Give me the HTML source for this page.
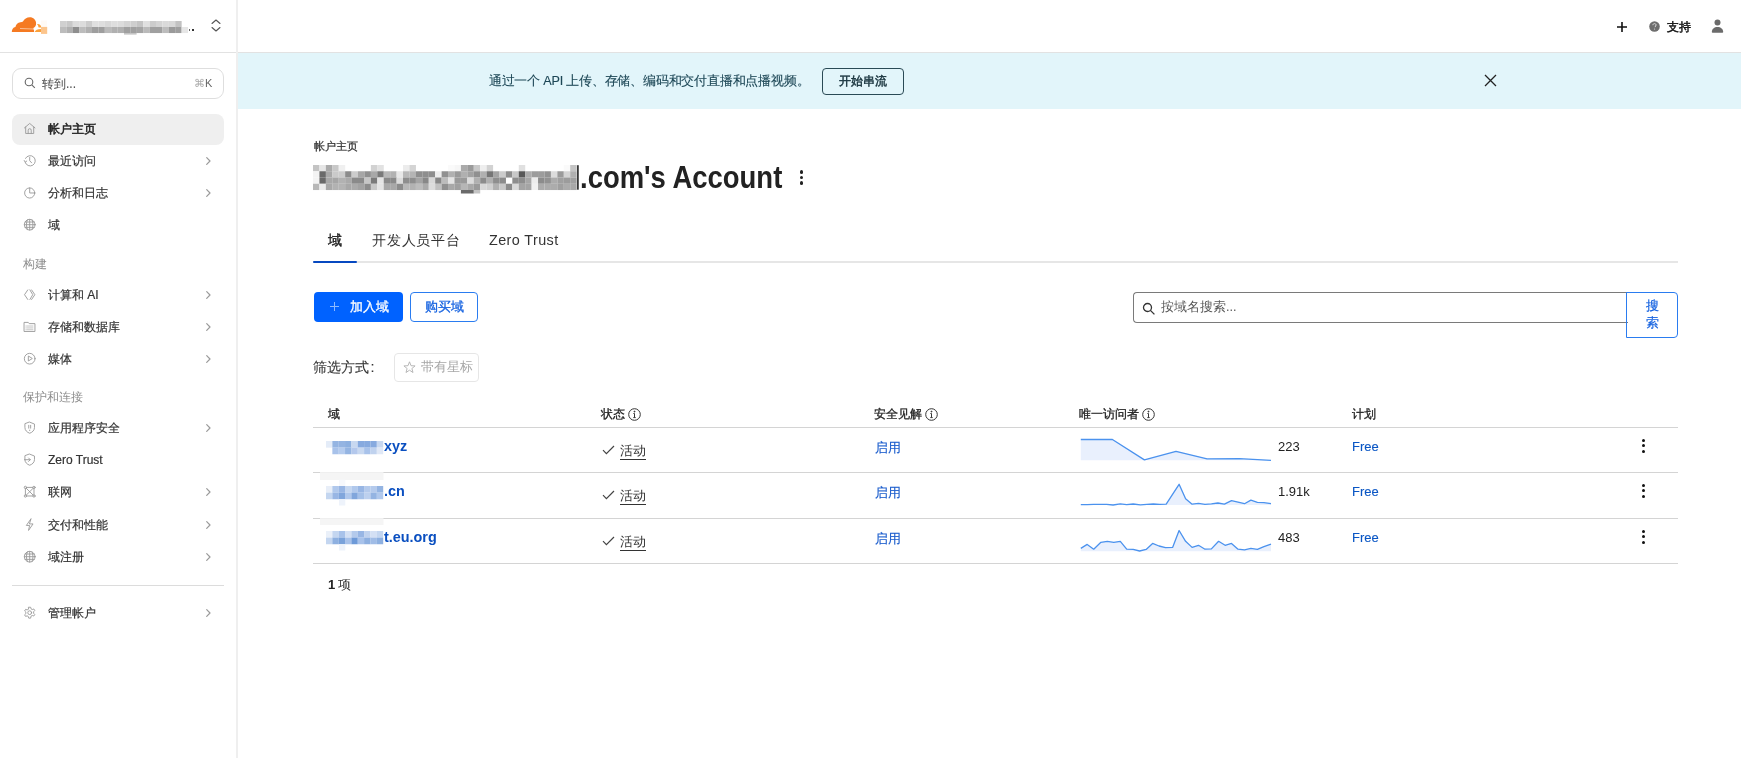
<!DOCTYPE html>
<html><head><meta charset="utf-8">
<style>
*{box-sizing:border-box;margin:0;padding:0}
html,body{width:1741px;height:758px;overflow:hidden;background:#fff;-webkit-font-smoothing:antialiased;font-family:"Liberation Sans",sans-serif;color:#313131}
.abs{position:absolute}
#top{position:absolute;left:0;top:0;width:1741px;height:53px;border-bottom:1px solid #e2e2e2}
#side{position:absolute;left:236px;top:0;width:2px;height:758px;background:#efefef}
#banner{position:absolute;left:238px;top:53px;width:1503px;height:56px;background:#e2f5fa}
.nt{position:absolute;left:48px;font-size:12px;line-height:16px;color:#333;white-space:nowrap;-webkit-text-stroke:0.2px #333}
.nt.sel{color:#222;-webkit-text-stroke:0.5px #222}
.sec{position:absolute;left:23px;font-size:12px;line-height:16px;color:#8d8d8d}
.dom{position:absolute;left:384px;font-size:14.4px;line-height:18px;font-weight:bold;color:#0a4fc0}
.blurdom{position:absolute;left:326px;width:58px;height:13px;background:#a9c2ea}
.act{position:absolute;left:619.5px;font-size:12.6px;line-height:16px;color:#333;border-bottom:1px solid #333;padding-bottom:0}
.lnk{position:absolute;font-size:12.6px;line-height:16px;color:#1a5ccc;-webkit-text-stroke:0.15px #1a5ccc}
.free{font-size:13px;color:#0a56c4;-webkit-text-stroke:0.1px #0a56c4}
.num{position:absolute;left:1278px;font-size:13px;line-height:16px;color:#222}
.kebab{position:absolute;left:1642px;width:4px;height:18px}
.kebab i{display:block;width:3.2px;height:3.2px;border-radius:50%;background:#111;margin:0 0 2.6px 0}
.th{position:absolute;top:406px;font-size:11.7px;line-height:16px;color:#222;-webkit-text-stroke:0.3px #222}
.info{display:inline-block;vertical-align:top;margin-left:3.3px;margin-top:1.5px}
.hline{position:absolute;left:313px;width:1365px;height:1px;background:#d4d4d4}
</style></head><body><div id="root" style="position:absolute;left:0;top:0;width:1741px;height:758px;will-change:transform">
<div id="top"></div>
<div id="side"></div>
<div id="banner"></div>

<!-- logo -->
<svg class="abs" style="left:0;top:0" width="50" height="40" viewBox="0 0 50 40">
  <rect x="41" y="20.5" width="6" height="6.4" fill="#fffaf5"/>
  <path d="M11.8 32C11.8 29.6 13.1 27.4 15.4 27.1C15.9 24.4 17.8 22.4 20.4 22.2C21.6 22.1 22.4 21.9 23 21.5C24.2 18.9 26.8 17.3 29.8 17.3C33.3 17.3 36.1 19.9 36.1 23.4C36.1 25.6 35.1 27.1 33.3 28L33.5 29.3C34 30.1 34.2 31 34.1 32Z" fill="#f57a22"/>
  <path d="M20 28.4L33.4 28.8L33.5 29.3L20 29.1Z" fill="#fff"/>
  <path d="M37 24.1C39.6 23.8 41.2 25.3 41.2 27.6L38.6 27.6C38.4 26.2 37.9 25 37 24.1Z" fill="#fba03a"/>
  <path d="M34.7 32C35.4 30.3 37.4 29.2 41.2 29.1L41.2 32Z" fill="#fba03a"/>
  <rect x="41" y="26.9" width="6.2" height="7" fill="#fcc58c"/>
</svg>
<!-- account name blurred -->
<svg class="abs" style="left:60px;top:21px;overflow:visible" width="128" height="12"><rect x="0.00" y="0.00" width="6.45" height="6.05" fill="#d0d0d0"/><rect x="6.40" y="0.00" width="6.45" height="6.05" fill="#c8c8c8"/><rect x="12.80" y="0.00" width="6.45" height="6.05" fill="#dcdcdc"/><rect x="19.20" y="0.00" width="6.45" height="6.05" fill="#dcdcdc"/><rect x="25.60" y="0.00" width="6.45" height="6.05" fill="#cccccc"/><rect x="32.00" y="0.00" width="6.45" height="6.05" fill="#e0e0e0"/><rect x="38.40" y="0.00" width="6.45" height="6.05" fill="#dedede"/><rect x="44.80" y="0.00" width="6.45" height="6.05" fill="#d8d8d8"/><rect x="51.20" y="0.00" width="6.45" height="6.05" fill="#dedede"/><rect x="57.60" y="0.00" width="6.45" height="6.05" fill="#dcdcdc"/><rect x="64.00" y="0.00" width="6.45" height="6.05" fill="#d4d4d4"/><rect x="70.40" y="0.00" width="6.45" height="6.05" fill="#cecece"/><rect x="76.80" y="0.00" width="6.45" height="6.05" fill="#c4c4c4"/><rect x="83.20" y="0.00" width="6.45" height="6.05" fill="#e0e0e0"/><rect x="89.60" y="0.00" width="6.45" height="6.05" fill="#cccccc"/><rect x="96.00" y="0.00" width="6.45" height="6.05" fill="#d4d4d4"/><rect x="102.40" y="0.00" width="6.45" height="6.05" fill="#dadada"/><rect x="108.80" y="0.00" width="6.45" height="6.05" fill="#d8d8d8"/><rect x="115.20" y="0.00" width="6.45" height="6.05" fill="#c2c2c2"/><rect x="0.00" y="6.00" width="6.45" height="6.05" fill="#bcbcbc"/><rect x="6.40" y="6.00" width="6.45" height="6.05" fill="#b0b0b0"/><rect x="12.80" y="6.00" width="6.45" height="6.05" fill="#8e8e8e"/><rect x="19.20" y="6.00" width="6.45" height="6.05" fill="#bcbcbc"/><rect x="25.60" y="6.00" width="6.45" height="6.05" fill="#b0b0b0"/><rect x="32.00" y="6.00" width="6.45" height="6.05" fill="#9e9e9e"/><rect x="38.40" y="6.00" width="6.45" height="6.05" fill="#9e9e9e"/><rect x="44.80" y="6.00" width="6.45" height="6.05" fill="#bababa"/><rect x="51.20" y="6.00" width="6.45" height="6.05" fill="#b0b0b0"/><rect x="57.60" y="6.00" width="6.45" height="6.05" fill="#b0b0b0"/><rect x="64.00" y="6.00" width="6.45" height="6.05" fill="#a0a0a0"/><rect x="70.40" y="6.00" width="6.45" height="6.05" fill="#a0a0a0"/><rect x="76.80" y="6.00" width="6.45" height="6.05" fill="#a4a4a4"/><rect x="83.20" y="6.00" width="6.45" height="6.05" fill="#bababa"/><rect x="89.60" y="6.00" width="6.45" height="6.05" fill="#a0a0a0"/><rect x="96.00" y="6.00" width="6.45" height="6.05" fill="#a0a0a0"/><rect x="102.40" y="6.00" width="6.45" height="6.05" fill="#bcbcbc"/><rect x="108.80" y="6.00" width="6.45" height="6.05" fill="#9a9a9a"/><rect x="115.20" y="6.00" width="6.45" height="6.05" fill="#9e9e9e"/><rect x="121.60" y="6.00" width="6.45" height="6.05" fill="#e6e6e6"/><rect x="64.00" y="12.00" width="12.60" height="1.60" fill="#c4c4c4"/></svg>
<div class="abs" style="left:188.5px;top:29px;width:1.6px;height:1.8px;background:#666"></div>
<div class="abs" style="left:192px;top:29px;width:1.8px;height:1.8px;background:#333"></div>
<svg class="abs" style="left:210px;top:19px" width="12" height="13" viewBox="0 0 12 13" fill="none" stroke="#555" stroke-width="1.1" stroke-linecap="round" stroke-linejoin="round"><path d="M2 4.5L6 1l4 3.5M2 8.5L6 12l4-3.5"/></svg>

<!-- sidebar search -->
<div class="abs" style="left:12px;top:68px;width:212px;height:31px;border:1px solid #dedede;border-radius:9px"></div>
<svg class="abs" style="left:24px;top:77px" width="12" height="12" viewBox="0 0 12 12" fill="none" stroke="#666" stroke-width="1.1"><circle cx="5" cy="5" r="3.8"/><path d="M7.8 7.8L10.8 10.8"/></svg>
<div class="abs" style="left:42px;top:76px;font-size:12px;line-height:16px;color:#555;-webkit-text-stroke:0.1px #555">转到...</div>
<div class="abs" style="left:194px;top:76px;font-size:11px;line-height:14px;color:#666"><span style="color:#aaa">⌘</span>K</div>

<!-- selected bg -->
<div class="abs" style="left:12px;top:114px;width:212px;height:31px;background:#efefef;border-radius:8px"></div>

<div class="sec" style="top:256px">构建</div>
<div class="sec" style="top:389px">保护和连接</div>
<div class="abs" style="left:12px;top:585px;width:212px;height:1px;background:#dcdcdc"></div>
<svg class="abs" style="left:23.3px;top:121.8px" width="13.4" height="13.4" viewBox="0 0 14 14" fill="none" stroke="#999999" stroke-width="0.95" stroke-linecap="round" stroke-linejoin="round"><path d="M1.5 6.2L7 1.5l5.5 4.7M2.8 5.2v6.8h8.4V5.2M5.4 12V8.6a1.6 1.6 0 0 1 3.2 0V12"/></svg>
<div class="nt sel" style="top:120.5px">帐户主页</div>
<svg class="abs" style="left:23.3px;top:154.3px" width="13.4" height="13.4" viewBox="0 0 14 14" fill="none" stroke="#999999" stroke-width="0.95" stroke-linecap="round" stroke-linejoin="round"><path d="M2.2 8.6A5.4 5.4 0 1 0 2.6 4.6"/><path d="M1.3 6.8l1 1.7 1.6-1.1"/><path d="M7 3.6V7l2 2.2"/></svg>
<div class="nt" style="top:153.0px">最近访问</div>
<svg class="abs" style="left:204px;top:156.2px" width="8" height="10" viewBox="0 0 8 10" fill="none" stroke="#9a9a9a" stroke-width="1.2" stroke-linecap="round" stroke-linejoin="round"><path d="M2.7 1.6L6 5 2.7 8.4"/></svg>
<svg class="abs" style="left:23.3px;top:186.3px" width="13.4" height="13.4" viewBox="0 0 14 14" fill="none" stroke="#999999" stroke-width="0.95" stroke-linecap="round" stroke-linejoin="round"><circle cx="7" cy="7.3" r="5.3"/><path d="M7 2v5.3h5.3"/></svg>
<div class="nt" style="top:185.0px">分析和日志</div>
<svg class="abs" style="left:204px;top:188.2px" width="8" height="10" viewBox="0 0 8 10" fill="none" stroke="#9a9a9a" stroke-width="1.2" stroke-linecap="round" stroke-linejoin="round"><path d="M2.7 1.6L6 5 2.7 8.4"/></svg>
<svg class="abs" style="left:23.3px;top:218.3px" width="13.4" height="13.4" viewBox="0 0 14 14" fill="none" stroke="#999999" stroke-width="0.95" stroke-linecap="round" stroke-linejoin="round"><circle cx="7" cy="7" r="5.6"/><path d="M1.4 7h11.2M2.2 4.2h9.6M2.2 9.8h9.6M7 1.4v11.2M4.6 1.9c-1.4 3-1.4 7.2 0 10.2M9.4 1.9c1.4 3 1.4 7.2 0 10.2"/></svg>
<div class="nt" style="top:217.0px">域</div>
<svg class="abs" style="left:23.3px;top:288.3px" width="13.4" height="13.4" viewBox="0 0 14 14" fill="none" stroke="#999999" stroke-width="0.95" stroke-linecap="round" stroke-linejoin="round"><path d="M5 2L1.6 7 5 12M7.2 2l3 5-3 5M9 2l3.4 5L9 12"/></svg>
<div class="nt" style="top:287.0px">计算和 AI</div>
<svg class="abs" style="left:204px;top:290.2px" width="8" height="10" viewBox="0 0 8 10" fill="none" stroke="#9a9a9a" stroke-width="1.2" stroke-linecap="round" stroke-linejoin="round"><path d="M2.7 1.6L6 5 2.7 8.4"/></svg>
<svg class="abs" style="left:23.3px;top:320.3px" width="13.4" height="13.4" viewBox="0 0 14 14" fill="none" stroke="#999999" stroke-width="0.95" stroke-linecap="round" stroke-linejoin="round"><path d="M1.5 2.5h4l1 1.3h6v8.2h-11z"/><path d="M4.6 6.3h5.8M4.6 8.3h5.8M4.6 10.2h5.8M3 6.3h.6M3 8.3h.6M3 10.2h.6" stroke-width=".8" opacity=".75"/></svg>
<div class="nt" style="top:319.0px">存储和数据库</div>
<svg class="abs" style="left:204px;top:322.2px" width="8" height="10" viewBox="0 0 8 10" fill="none" stroke="#9a9a9a" stroke-width="1.2" stroke-linecap="round" stroke-linejoin="round"><path d="M2.7 1.6L6 5 2.7 8.4"/></svg>
<svg class="abs" style="left:23.3px;top:352.3px" width="13.4" height="13.4" viewBox="0 0 14 14" fill="none" stroke="#999999" stroke-width="0.95" stroke-linecap="round" stroke-linejoin="round"><circle cx="7" cy="7" r="5.6"/><path d="M5.6 4.6v4.8L9.4 7z"/></svg>
<div class="nt" style="top:351.0px">媒体</div>
<svg class="abs" style="left:204px;top:354.2px" width="8" height="10" viewBox="0 0 8 10" fill="none" stroke="#9a9a9a" stroke-width="1.2" stroke-linecap="round" stroke-linejoin="round"><path d="M2.7 1.6L6 5 2.7 8.4"/></svg>
<svg class="abs" style="left:23.3px;top:421.3px" width="13.4" height="13.4" viewBox="0 0 14 14" fill="none" stroke="#999999" stroke-width="0.95" stroke-linecap="round" stroke-linejoin="round"><path d="M7 1.2l5 2v3.6c0 3-2.2 5-5 6-2.8-1-5-3-5-6V3.2z"/><path d="M6 4.5v3M8 4.5v3M7 9.5v.5"/></svg>
<div class="nt" style="top:420.0px">应用程序安全</div>
<svg class="abs" style="left:204px;top:423.2px" width="8" height="10" viewBox="0 0 8 10" fill="none" stroke="#9a9a9a" stroke-width="1.2" stroke-linecap="round" stroke-linejoin="round"><path d="M2.7 1.6L6 5 2.7 8.4"/></svg>
<svg class="abs" style="left:23.3px;top:453.3px" width="13.4" height="13.4" viewBox="0 0 14 14" fill="none" stroke="#999999" stroke-width="0.95" stroke-linecap="round" stroke-linejoin="round"><path d="M7 1.2l5 2v3.6c0 3-2.2 5-5 6-2.8-1-5-3-5-6V3.2z"/><path d="M1.5 7h6M5.8 5.2L7.6 7 5.8 8.8"/></svg>
<div class="nt" style="top:452.0px">Zero Trust</div>
<svg class="abs" style="left:23.3px;top:485.3px" width="13.4" height="13.4" viewBox="0 0 14 14" fill="none" stroke="#999999" stroke-width="0.95" stroke-linecap="round" stroke-linejoin="round"><circle cx="2.5" cy="2.5" r="1.2"/><circle cx="11.5" cy="2.5" r="1.2"/><circle cx="2.5" cy="11.5" r="1.2"/><circle cx="11.5" cy="11.5" r="1.2"/><path d="M3.7 2.5h6.6M3.7 11.5h6.6M2.5 3.7v6.6M11.5 3.7v6.6M3.4 3.4l7.2 7.2M10.6 3.4l-7.2 7.2"/></svg>
<div class="nt" style="top:484.0px">联网</div>
<svg class="abs" style="left:204px;top:487.2px" width="8" height="10" viewBox="0 0 8 10" fill="none" stroke="#9a9a9a" stroke-width="1.2" stroke-linecap="round" stroke-linejoin="round"><path d="M2.7 1.6L6 5 2.7 8.4"/></svg>
<svg class="abs" style="left:23.3px;top:518.3px" width="13.4" height="13.4" viewBox="0 0 14 14" fill="none" stroke="#999999" stroke-width="0.95" stroke-linecap="round" stroke-linejoin="round"><path d="M8.2 1L3.5 7.8h3.4L5.8 13l4.7-6.8H7.1z"/></svg>
<div class="nt" style="top:517.0px">交付和性能</div>
<svg class="abs" style="left:204px;top:520.2px" width="8" height="10" viewBox="0 0 8 10" fill="none" stroke="#9a9a9a" stroke-width="1.2" stroke-linecap="round" stroke-linejoin="round"><path d="M2.7 1.6L6 5 2.7 8.4"/></svg>
<svg class="abs" style="left:23.3px;top:550.3px" width="13.4" height="13.4" viewBox="0 0 14 14" fill="none" stroke="#999999" stroke-width="0.95" stroke-linecap="round" stroke-linejoin="round"><circle cx="7" cy="7" r="5.6"/><path d="M1.4 7h11.2M2.2 4.2h9.6M2.2 9.8h9.6M7 1.4v11.2M4.6 1.9c-1.4 3-1.4 7.2 0 10.2M9.4 1.9c1.4 3 1.4 7.2 0 10.2"/></svg>
<div class="nt" style="top:549.0px">域注册</div>
<svg class="abs" style="left:204px;top:552.2px" width="8" height="10" viewBox="0 0 8 10" fill="none" stroke="#9a9a9a" stroke-width="1.2" stroke-linecap="round" stroke-linejoin="round"><path d="M2.7 1.6L6 5 2.7 8.4"/></svg>
<svg class="abs" style="left:23.3px;top:606.3px" width="13.4" height="13.4" viewBox="0 0 14 14" fill="none" stroke="#999999" stroke-width="0.95" stroke-linecap="round" stroke-linejoin="round"><circle cx="7" cy="7" r="2"/><path d="M6 1.3h2l.4 1.7 1.3.7 1.6-.6 1 1.7-1.2 1.2v1.6l1.2 1.2-1 1.7-1.6-.6-1.3.7L8 12.7H6l-.4-1.7-1.3-.7-1.6.6-1-1.7L3 8V6.4L1.7 5.2l1-1.7 1.6.6 1.3-.7z"/></svg>
<div class="nt" style="top:605.0px">管理帐户</div>
<svg class="abs" style="left:204px;top:608.2px" width="8" height="10" viewBox="0 0 8 10" fill="none" stroke="#9a9a9a" stroke-width="1.2" stroke-linecap="round" stroke-linejoin="round"><path d="M2.7 1.6L6 5 2.7 8.4"/></svg>

<!-- top right -->
<svg class="abs" style="left:1616px;top:21px" width="12" height="12" viewBox="0 0 12 12" stroke="#111" stroke-width="1.6"><path d="M6 1v10M1 6h10"/></svg>
<svg class="abs" style="left:1649px;top:21px" width="11" height="11" viewBox="0 0 11 11"><circle cx="5.5" cy="5.5" r="5.3" fill="#6e6e6e"/><path d="M3.9 4.2c0-1 .7-1.6 1.6-1.6s1.6.6 1.6 1.4c0 1-1.1 1.2-1.1 2.2" fill="none" stroke="#ddd" stroke-width="1"/><circle cx="5.5" cy="8" r=".6" fill="#ddd"/></svg>
<div class="abs" style="left:1667px;top:19px;font-size:12.3px;line-height:16px;color:#111;-webkit-text-stroke:0.45px #111">支持</div>
<svg class="abs" style="left:1711px;top:19px" width="13" height="14" viewBox="0 0 13 14" fill="#6b6b6b"><circle cx="6.5" cy="3.4" r="3"/><path d="M0.8 13c0-3 2.5-5 5.7-5s5.7 2 5.7 5c0 .5-.3.8-.8.8H1.6c-.5 0-.8-.3-.8-.8z"/></svg>

<!-- banner -->
<div class="abs" style="left:488.8px;top:73px;font-size:12.6px;letter-spacing:-0.2px;line-height:16px;color:#1d4756;white-space:nowrap;-webkit-text-stroke:0.12px #1d4756">通过一个 API 上传、存储、编码和交付直播和点播视频。</div>
<div class="abs" style="left:822px;top:68px;width:82px;height:27px;border:1px solid #2a4a55;border-radius:4px;font-size:12.2px;line-height:25px;text-align:center;color:#17323c;-webkit-text-stroke:0.45px #17323c">开始串流</div>
<svg class="abs" style="left:1484px;top:74px" width="13" height="13" viewBox="0 0 13 13" stroke="#222" stroke-width="1.3"><path d="M1 1l11 11M12 1L1 12"/></svg>

<!-- header -->
<div class="abs" style="left:313.5px;top:139px;font-size:10.8px;line-height:14px;color:#333;-webkit-text-stroke:0.25px #333">帐户主页</div>
<svg class="abs" style="left:313.2px;top:164.8px;overflow:visible" width="264" height="25"><rect x="0.00" y="0.00" width="6.48" height="6.30" fill="#c4c4c4"/><rect x="6.43" y="0.00" width="6.48" height="6.30" fill="#e6e6e6"/><rect x="12.86" y="0.00" width="6.48" height="6.30" fill="#aaaaaa"/><rect x="19.29" y="0.00" width="6.48" height="6.30" fill="#c8c8c8"/><rect x="25.72" y="0.00" width="6.48" height="6.30" fill="#f0f0f0"/><rect x="57.87" y="0.00" width="6.48" height="6.30" fill="#d2d2d2"/><rect x="64.30" y="0.00" width="6.48" height="6.30" fill="#e2e2e2"/><rect x="90.02" y="0.00" width="6.48" height="6.30" fill="#ececec"/><rect x="96.45" y="0.00" width="6.48" height="6.30" fill="#d4d4d4"/><rect x="135.03" y="0.00" width="6.48" height="6.30" fill="#fafafa"/><rect x="141.46" y="0.00" width="6.48" height="6.30" fill="#f6f6f6"/><rect x="147.89" y="0.00" width="6.48" height="6.30" fill="#aaaaaa"/><rect x="154.32" y="0.00" width="6.48" height="6.30" fill="#9a9a9a"/><rect x="160.75" y="0.00" width="6.48" height="6.30" fill="#c8c8c8"/><rect x="167.18" y="0.00" width="6.48" height="6.30" fill="#eeeeee"/><rect x="173.61" y="0.00" width="6.48" height="6.30" fill="#d2d2d2"/><rect x="205.76" y="0.00" width="6.48" height="6.30" fill="#e0e0e0"/><rect x="250.77" y="0.00" width="6.48" height="6.30" fill="#fafafa"/><rect x="257.20" y="0.00" width="6.48" height="6.30" fill="#c4c4c4"/><rect x="0.00" y="6.25" width="6.48" height="6.30" fill="#f3f3f3"/><rect x="6.43" y="6.25" width="6.48" height="6.30" fill="#6a6a6a"/><rect x="12.86" y="6.25" width="6.48" height="6.30" fill="#a8a8a8"/><rect x="19.29" y="6.25" width="6.48" height="6.30" fill="#cacaca"/><rect x="25.72" y="6.25" width="6.48" height="6.30" fill="#cccccc"/><rect x="32.15" y="6.25" width="6.48" height="6.30" fill="#8c8c8c"/><rect x="38.58" y="6.25" width="6.48" height="6.30" fill="#cccccc"/><rect x="45.01" y="6.25" width="6.48" height="6.30" fill="#a6a6a6"/><rect x="51.44" y="6.25" width="6.48" height="6.30" fill="#909090"/><rect x="57.87" y="6.25" width="6.48" height="6.30" fill="#a8a8a8"/><rect x="64.30" y="6.25" width="6.48" height="6.30" fill="#7a7a7a"/><rect x="70.73" y="6.25" width="6.48" height="6.30" fill="#b8b8b8"/><rect x="77.16" y="6.25" width="6.48" height="6.30" fill="#b2b2b2"/><rect x="83.59" y="6.25" width="6.48" height="6.30" fill="#e8e8e8"/><rect x="90.02" y="6.25" width="6.48" height="6.30" fill="#b8b8b8"/><rect x="96.45" y="6.25" width="6.48" height="6.30" fill="#b4b4b4"/><rect x="102.88" y="6.25" width="6.48" height="6.30" fill="#8e8e8e"/><rect x="109.31" y="6.25" width="6.48" height="6.30" fill="#8e8e8e"/><rect x="115.74" y="6.25" width="6.48" height="6.30" fill="#8e8e8e"/><rect x="122.17" y="6.25" width="6.48" height="6.30" fill="#eeeeee"/><rect x="128.60" y="6.25" width="6.48" height="6.30" fill="#909090"/><rect x="135.03" y="6.25" width="6.48" height="6.30" fill="#b0b0b0"/><rect x="141.46" y="6.25" width="6.48" height="6.30" fill="#9a9a9a"/><rect x="147.89" y="6.25" width="6.48" height="6.30" fill="#b0b0b0"/><rect x="154.32" y="6.25" width="6.48" height="6.30" fill="#a2a2a2"/><rect x="160.75" y="6.25" width="6.48" height="6.30" fill="#909090"/><rect x="167.18" y="6.25" width="6.48" height="6.30" fill="#b0b0b0"/><rect x="173.61" y="6.25" width="6.48" height="6.30" fill="#767676"/><rect x="180.04" y="6.25" width="6.48" height="6.30" fill="#a4a4a4"/><rect x="186.47" y="6.25" width="6.48" height="6.30" fill="#cccccc"/><rect x="192.90" y="6.25" width="6.48" height="6.30" fill="#8e8e8e"/><rect x="199.33" y="6.25" width="6.48" height="6.30" fill="#c8c8c8"/><rect x="205.76" y="6.25" width="6.48" height="6.30" fill="#585858"/><rect x="212.19" y="6.25" width="6.48" height="6.30" fill="#acacac"/><rect x="218.62" y="6.25" width="6.48" height="6.30" fill="#9c9c9c"/><rect x="225.05" y="6.25" width="6.48" height="6.30" fill="#9c9c9c"/><rect x="231.48" y="6.25" width="6.48" height="6.30" fill="#929292"/><rect x="237.91" y="6.25" width="6.48" height="6.30" fill="#dcdcdc"/><rect x="244.34" y="6.25" width="6.48" height="6.30" fill="#9a9a9a"/><rect x="250.77" y="6.25" width="6.48" height="6.30" fill="#d4d4d4"/><rect x="257.20" y="6.25" width="6.48" height="6.30" fill="#b0b0b0"/><rect x="0.00" y="12.50" width="6.48" height="6.30" fill="#f3f3f3"/><rect x="6.43" y="12.50" width="6.48" height="6.30" fill="#6a6a6a"/><rect x="12.86" y="12.50" width="6.48" height="6.30" fill="#a8a8a8"/><rect x="19.29" y="12.50" width="6.48" height="6.30" fill="#a6a6a6"/><rect x="25.72" y="12.50" width="6.48" height="6.30" fill="#b2b2b2"/><rect x="32.15" y="12.50" width="6.48" height="6.30" fill="#aaaaaa"/><rect x="38.58" y="12.50" width="6.48" height="6.30" fill="#8a8a8a"/><rect x="45.01" y="12.50" width="6.48" height="6.30" fill="#8a8a8a"/><rect x="51.44" y="12.50" width="6.48" height="6.30" fill="#c6c6c6"/><rect x="57.87" y="12.50" width="6.48" height="6.30" fill="#7a7a7a"/><rect x="64.30" y="12.50" width="6.48" height="6.30" fill="#e4e4e4"/><rect x="70.73" y="12.50" width="6.48" height="6.30" fill="#8a8a8a"/><rect x="77.16" y="12.50" width="6.48" height="6.30" fill="#8a8a8a"/><rect x="83.59" y="12.50" width="6.48" height="6.30" fill="#dcdcdc"/><rect x="90.02" y="12.50" width="6.48" height="6.30" fill="#8e8e8e"/><rect x="96.45" y="12.50" width="6.48" height="6.30" fill="#8e8e8e"/><rect x="102.88" y="12.50" width="6.48" height="6.30" fill="#a4a4a4"/><rect x="109.31" y="12.50" width="6.48" height="6.30" fill="#888888"/><rect x="115.74" y="12.50" width="6.48" height="6.30" fill="#d8d8d8"/><rect x="122.17" y="12.50" width="6.48" height="6.30" fill="#888888"/><rect x="128.60" y="12.50" width="6.48" height="6.30" fill="#bcbcbc"/><rect x="135.03" y="12.50" width="6.48" height="6.30" fill="#e4e4e4"/><rect x="141.46" y="12.50" width="6.48" height="6.30" fill="#9a9a9a"/><rect x="147.89" y="12.50" width="6.48" height="6.30" fill="#9a9a9a"/><rect x="154.32" y="12.50" width="6.48" height="6.30" fill="#dcdcdc"/><rect x="160.75" y="12.50" width="6.48" height="6.30" fill="#b0b0b0"/><rect x="167.18" y="12.50" width="6.48" height="6.30" fill="#8c8c8c"/><rect x="173.61" y="12.50" width="6.48" height="6.30" fill="#b0b0b0"/><rect x="180.04" y="12.50" width="6.48" height="6.30" fill="#8e8e8e"/><rect x="186.47" y="12.50" width="6.48" height="6.30" fill="#8c8c8c"/><rect x="199.33" y="12.50" width="6.48" height="6.30" fill="#8e8e8e"/><rect x="205.76" y="12.50" width="6.48" height="6.30" fill="#8e8e8e"/><rect x="212.19" y="12.50" width="6.48" height="6.30" fill="#a6a6a6"/><rect x="218.62" y="12.50" width="6.48" height="6.30" fill="#ececec"/><rect x="225.05" y="12.50" width="6.48" height="6.30" fill="#8c8c8c"/><rect x="231.48" y="12.50" width="6.48" height="6.30" fill="#929292"/><rect x="237.91" y="12.50" width="6.48" height="6.30" fill="#acacac"/><rect x="244.34" y="12.50" width="6.48" height="6.30" fill="#a0a0a0"/><rect x="250.77" y="12.50" width="6.48" height="6.30" fill="#9c9c9c"/><rect x="257.20" y="12.50" width="6.48" height="6.30" fill="#a0a0a0"/><rect x="0.00" y="18.75" width="6.48" height="6.30" fill="#b8b8b8"/><rect x="6.43" y="18.75" width="6.48" height="6.30" fill="#ececec"/><rect x="12.86" y="18.75" width="6.48" height="6.30" fill="#a8a8a8"/><rect x="19.29" y="18.75" width="6.48" height="6.30" fill="#b2b2b2"/><rect x="25.72" y="18.75" width="6.48" height="6.30" fill="#b4b4b4"/><rect x="32.15" y="18.75" width="6.48" height="6.30" fill="#a8a8a8"/><rect x="38.58" y="18.75" width="6.48" height="6.30" fill="#aaaaaa"/><rect x="45.01" y="18.75" width="6.48" height="6.30" fill="#a2a2a2"/><rect x="51.44" y="18.75" width="6.48" height="6.30" fill="#8c8c8c"/><rect x="57.87" y="18.75" width="6.48" height="6.30" fill="#c8c8c8"/><rect x="64.30" y="18.75" width="6.48" height="6.30" fill="#e4e4e4"/><rect x="70.73" y="18.75" width="6.48" height="6.30" fill="#a8a8a8"/><rect x="77.16" y="18.75" width="6.48" height="6.30" fill="#a8a8a8"/><rect x="83.59" y="18.75" width="6.48" height="6.30" fill="#8c8c8c"/><rect x="90.02" y="18.75" width="6.48" height="6.30" fill="#b8b8b8"/><rect x="96.45" y="18.75" width="6.48" height="6.30" fill="#b2b2b2"/><rect x="102.88" y="18.75" width="6.48" height="6.30" fill="#bcbcbc"/><rect x="109.31" y="18.75" width="6.48" height="6.30" fill="#aaaaaa"/><rect x="115.74" y="18.75" width="6.48" height="6.30" fill="#dcdcdc"/><rect x="122.17" y="18.75" width="6.48" height="6.30" fill="#c0c0c0"/><rect x="128.60" y="18.75" width="6.48" height="6.30" fill="#909090"/><rect x="135.03" y="18.75" width="6.48" height="6.30" fill="#a8a8a8"/><rect x="141.46" y="18.75" width="6.48" height="6.30" fill="#a0a0a0"/><rect x="147.89" y="18.75" width="6.48" height="6.30" fill="#b6b6b6"/><rect x="154.32" y="18.75" width="6.48" height="6.30" fill="#a8a8a8"/><rect x="160.75" y="18.75" width="6.48" height="6.30" fill="#9a9a9a"/><rect x="167.18" y="18.75" width="6.48" height="6.30" fill="#d8d8d8"/><rect x="173.61" y="18.75" width="6.48" height="6.30" fill="#d0d0d0"/><rect x="180.04" y="18.75" width="6.48" height="6.30" fill="#b0b0b0"/><rect x="186.47" y="18.75" width="6.48" height="6.30" fill="#c8c8c8"/><rect x="192.90" y="18.75" width="6.48" height="6.30" fill="#8c8c8c"/><rect x="199.33" y="18.75" width="6.48" height="6.30" fill="#dadada"/><rect x="205.76" y="18.75" width="6.48" height="6.30" fill="#a4a4a4"/><rect x="212.19" y="18.75" width="6.48" height="6.30" fill="#a4a4a4"/><rect x="218.62" y="18.75" width="6.48" height="6.30" fill="#f0f0f0"/><rect x="225.05" y="18.75" width="6.48" height="6.30" fill="#acacac"/><rect x="231.48" y="18.75" width="6.48" height="6.30" fill="#acacac"/><rect x="237.91" y="18.75" width="6.48" height="6.30" fill="#acacac"/><rect x="244.34" y="18.75" width="6.48" height="6.30" fill="#a0a0a0"/><rect x="250.77" y="18.75" width="6.48" height="6.30" fill="#acacac"/><rect x="257.20" y="18.75" width="6.48" height="6.30" fill="#a8a8a8"/><rect x="147.90" y="25.00" width="12.90" height="3.50" fill="#6a6a6a"/><rect x="160.80" y="25.00" width="6.40" height="3.50" fill="#c4c4c4"/><rect x="264.10" y="0.20" width="1.60" height="24.50" fill="#222"/></svg>
<div class="abs" style="left:580px;top:159.5px;font-size:30.5px;line-height:34px;letter-spacing:0px;font-weight:bold;color:#222;white-space:nowrap;transform:scaleX(0.9);transform-origin:0 0">.com's Account</div>
<div class="abs" style="left:799.5px;top:170px;width:4px"><i style="display:block;width:3.5px;height:3.5px;border-radius:50%;background:#222;margin-bottom:2px"></i><i style="display:block;width:3.5px;height:3.5px;border-radius:50%;background:#222;margin-bottom:2px"></i><i style="display:block;width:3.5px;height:3.5px;border-radius:50%;background:#222"></i></div>

<!-- tabs -->
<div class="abs" style="left:328px;top:231px;font-size:14.4px;line-height:18px;color:#222;-webkit-text-stroke:0.4px #222">域</div>
<div class="abs" style="left:372px;top:231px;font-size:14.4px;letter-spacing:0.8px;line-height:18px;color:#333">开发人员平台</div>
<div class="abs" style="left:489px;top:231px;font-size:14.4px;letter-spacing:0.4px;line-height:18px;color:#333">Zero Trust</div>
<div class="abs" style="left:313px;top:261px;width:1365px;height:2px;background:#e6e6e6"></div>
<div class="abs" style="left:313px;top:260.5px;width:44px;height:2px;background:#0648c0;border-radius:1px"></div>

<!-- buttons -->
<div class="abs" style="left:314px;top:292px;width:89px;height:30px;background:#0062ff;border-radius:4px"></div>
<svg class="abs" style="left:329.5px;top:302px" width="9" height="9" viewBox="0 0 9 9" stroke="#8cbaff" stroke-width="1"><path d="M4.5 0v9M0 4.5h9"/></svg>
<div class="abs" style="left:350px;top:299px;font-size:12.6px;line-height:16px;color:#fff;-webkit-text-stroke:0.3px #fff">加入域</div>
<div class="abs" style="left:410px;top:292px;width:68px;height:30px;border:1px solid #2a7cf0;border-radius:4px"></div>
<div class="abs" style="left:425px;top:299px;font-size:12.6px;line-height:16px;color:#1663e0;-webkit-text-stroke:0.3px #1663e0">购买域</div>

<!-- search -->
<div class="abs" style="left:1133px;top:292px;width:495px;height:31px;border:1px solid #7a7a7a;border-right:none;border-radius:4px 0 0 4px"></div>
<svg class="abs" style="left:1142px;top:302px" width="14" height="14" viewBox="0 0 14 14" fill="none" stroke="#333" stroke-width="1.3"><circle cx="5.5" cy="5.5" r="4"/><path d="M8.4 8.4l4 4"/></svg>
<div class="abs" style="left:1161px;top:299px;font-size:12.6px;line-height:16px;color:#555">按域名搜索...</div>
<div class="abs" style="left:1626px;top:292px;width:52px;height:46px;border:1px solid #2a7cf0;border-radius:0 4px 4px 0"></div>
<div class="abs" style="left:1646px;top:298px;width:14px;font-size:12.6px;line-height:16.5px;color:#1663e0;-webkit-text-stroke:0.2px #1663e0">搜索</div>

<!-- filter -->
<div class="abs" style="left:313px;top:358px;font-size:14.4px;line-height:18px;color:#333;-webkit-text-stroke:0.1px #333">筛选方式<span style="margin-left:1.5px">:</span></div>
<div class="abs" style="left:394px;top:352.5px;width:84.5px;height:29px;border:1px solid #e6e6e6;border-radius:4px"></div>
<svg class="abs" style="left:402.5px;top:360.8px" width="13" height="13" viewBox="0 0 13 13" fill="none" stroke="#b0b0b0" stroke-width="0.9" stroke-linejoin="round"><path d="M6.5 0.8l1.5 3.9 4.1.2-3.2 2.6 1.1 4-3.5-2.3-3.5 2.3 1.1-4L0.9 4.9l4.1-.2z"/></svg>
<div class="abs" style="left:420.5px;top:359px;font-size:12.6px;line-height:16px;color:#a6a6a6;white-space:nowrap">带有星标</div>

<!-- table -->
<div class="th" style="left:328px">域</div>
<div class="th" style="left:601px">状态<svg class="info" width="13" height="13" viewBox="0 0 13 13" fill="none" stroke="#333" stroke-width="1"><circle cx="6.5" cy="6.5" r="5.8"/><path d="M6.5 5.5v4M5.3 9.6h2.4M5.4 5.5h1.1"/><circle cx="6.5" cy="3.6" r=".5" fill="#333"/></svg></div>
<div class="th" style="left:874px">安全见解<svg class="info" width="13" height="13" viewBox="0 0 13 13" fill="none" stroke="#333" stroke-width="1"><circle cx="6.5" cy="6.5" r="5.8"/><path d="M6.5 5.5v4M5.3 9.6h2.4M5.4 5.5h1.1"/><circle cx="6.5" cy="3.6" r=".5" fill="#333"/></svg></div>
<div class="th" style="left:1079px">唯一访问者<svg class="info" width="13" height="13" viewBox="0 0 13 13" fill="none" stroke="#333" stroke-width="1"><circle cx="6.5" cy="6.5" r="5.8"/><path d="M6.5 5.5v4M5.3 9.6h2.4M5.4 5.5h1.1"/><circle cx="6.5" cy="3.6" r=".5" fill="#333"/></svg></div>
<div class="th" style="left:1352px">计划</div>
<div class="hline" style="top:427px"></div>
<div class="hline" style="top:472px"></div>
<div class="hline" style="top:518px"></div>
<div class="hline" style="top:563px"></div>
<div class="dom" style="top:436.5px">xyz</div>
<svg class="abs" style="left:326px;top:440.6px;overflow:visible" width="57" height="13"><rect x="0.00" y="0.00" width="6.40" height="6.65" fill="#e4ecf8"/><rect x="6.35" y="0.00" width="6.40" height="6.65" fill="#94b4e2"/><rect x="12.70" y="0.00" width="6.40" height="6.65" fill="#94b4e2"/><rect x="19.05" y="0.00" width="6.40" height="6.65" fill="#8db0e0"/><rect x="25.40" y="0.00" width="6.40" height="6.65" fill="#c8d8f0"/><rect x="31.75" y="0.00" width="6.40" height="6.65" fill="#87aadf"/><rect x="38.10" y="0.00" width="6.40" height="6.65" fill="#87aadf"/><rect x="44.45" y="0.00" width="6.40" height="6.65" fill="#87aadf"/><rect x="50.80" y="0.00" width="6.40" height="6.65" fill="#c8d8f0"/><rect x="6.35" y="6.60" width="6.40" height="6.65" fill="#a8c2ea"/><rect x="12.70" y="6.60" width="6.40" height="6.65" fill="#b4cbee"/><rect x="19.05" y="6.60" width="6.40" height="6.65" fill="#94b4e2"/><rect x="25.40" y="6.60" width="6.40" height="6.65" fill="#b4c8ec"/><rect x="31.75" y="6.60" width="6.40" height="6.65" fill="#c8d8f0"/><rect x="38.10" y="6.60" width="6.40" height="6.65" fill="#a8c2ea"/><rect x="44.45" y="6.60" width="6.40" height="6.65" fill="#c0d2ee"/><rect x="50.80" y="6.60" width="6.40" height="6.65" fill="#e0e8f6"/></svg>
<svg class="abs" style="left:602px;top:445px" width="13" height="10" viewBox="0 0 13 10" fill="none" stroke="#444" stroke-width="1.2"><path d="M1 5.2l3.4 3.4L12 1"/></svg>
<div class="act" style="top:443px">活动</div>
<div class="lnk" style="left:874.5px;top:440px">启用</div>
<svg class="abs" style="left:1070px;top:428px" width="210" height="40" viewBox="0 0 210 40"><polygon points="10.8,32.3 10.8,11.5 42.4,11.5 74.4,31.9 106.0,23.3 137.1,30.9 169.4,30.6 201.0,32.3 201.0,32.3" fill="#e9f0fd"/><polyline points="10.8,11.5 42.4,11.5 74.4,31.9 106.0,23.3 137.1,30.9 169.4,30.6 201.0,32.3" fill="none" stroke="#4b92ee" stroke-width="1.3" stroke-linejoin="round"/></svg>
<div class="num" style="top:439.2px">223</div>
<div class="lnk free" style="left:1352px;top:439.2px">Free</div>
<div class="kebab" style="top:438.5px"><i></i><i></i><i></i></div>
<div class="dom" style="top:481.5px">.cn</div>
<svg class="abs" style="left:326px;top:485.8px;overflow:visible" width="57" height="13"><rect x="0.00" y="0.00" width="6.40" height="6.65" fill="#e8eef8"/><rect x="6.35" y="0.00" width="6.40" height="6.65" fill="#b0c8ec"/><rect x="12.70" y="0.00" width="6.40" height="6.65" fill="#98b6e4"/><rect x="19.05" y="0.00" width="6.40" height="6.65" fill="#c4d6f0"/><rect x="25.40" y="0.00" width="6.40" height="6.65" fill="#b0c8ec"/><rect x="31.75" y="0.00" width="6.40" height="6.65" fill="#98b6e4"/><rect x="38.10" y="0.00" width="6.40" height="6.65" fill="#b4caec"/><rect x="44.45" y="0.00" width="6.40" height="6.65" fill="#b4caec"/><rect x="50.80" y="0.00" width="6.40" height="6.65" fill="#94b4e2"/><rect x="0.00" y="6.60" width="6.40" height="6.65" fill="#c4d6f0"/><rect x="6.35" y="6.60" width="6.40" height="6.65" fill="#98b6e4"/><rect x="12.70" y="6.60" width="6.40" height="6.65" fill="#80a6dc"/><rect x="19.05" y="6.60" width="6.40" height="6.65" fill="#b0c8ec"/><rect x="25.40" y="6.60" width="6.40" height="6.65" fill="#80a6dc"/><rect x="31.75" y="6.60" width="6.40" height="6.65" fill="#a4c0e8"/><rect x="38.10" y="6.60" width="6.40" height="6.65" fill="#bcd0ee"/><rect x="44.45" y="6.60" width="6.40" height="6.65" fill="#94b4e2"/><rect x="50.80" y="6.60" width="6.40" height="6.65" fill="#b0c8ec"/><rect x="-6.00" y="-13.80" width="63.50" height="7.80" fill="#f5f5f5"/><rect x="13.00" y="13.20" width="6.30" height="6.30" fill="#eef3fb"/><rect x="13.00" y="-6.30" width="6.30" height="6.30" fill="#f6f8fc"/></svg>
<svg class="abs" style="left:602px;top:490px" width="13" height="10" viewBox="0 0 13 10" fill="none" stroke="#444" stroke-width="1.2"><path d="M1 5.2l3.4 3.4L12 1"/></svg>
<div class="act" style="top:488px">活动</div>
<div class="lnk" style="left:874.5px;top:485px">启用</div>
<svg class="abs" style="left:1070px;top:474px" width="210" height="40" viewBox="0 0 210 40"><polygon points="10.8,30.9 10.8,30.6 17.2,30.6 23.7,30.4 30.2,30.4 36.6,30.3 43.1,31.0 50.3,29.9 56.7,30.6 63.2,30.0 70.4,30.9 76.8,30.3 83.3,30.0 89.7,30.3 96.2,30.2 102.7,20.1 109.1,10.3 115.6,24.7 122.1,30.2 128.5,29.4 135.0,30.4 141.4,29.9 147.9,29.0 154.4,30.2 161.5,26.6 168.0,28.1 174.5,29.7 180.9,26.1 187.4,28.3 193.9,28.7 201.0,29.7 201.0,30.9" fill="#e9f0fd"/><polyline points="10.8,30.6 17.2,30.6 23.7,30.4 30.2,30.4 36.6,30.3 43.1,31.0 50.3,29.9 56.7,30.6 63.2,30.0 70.4,30.9 76.8,30.3 83.3,30.0 89.7,30.3 96.2,30.2 102.7,20.1 109.1,10.3 115.6,24.7 122.1,30.2 128.5,29.4 135.0,30.4 141.4,29.9 147.9,29.0 154.4,30.2 161.5,26.6 168.0,28.1 174.5,29.7 180.9,26.1 187.4,28.3 193.9,28.7 201.0,29.7" fill="none" stroke="#4b92ee" stroke-width="1.3" stroke-linejoin="round"/></svg>
<div class="num" style="top:484.2px">1.91k</div>
<div class="lnk free" style="left:1352px;top:484.2px">Free</div>
<div class="kebab" style="top:483.5px"><i></i><i></i><i></i></div>
<div class="dom" style="top:527.5px">t.eu.org</div>
<svg class="abs" style="left:326px;top:530.8px;overflow:visible" width="57" height="13"><rect x="0.00" y="0.00" width="6.40" height="6.65" fill="#eaf0f9"/><rect x="6.35" y="0.00" width="6.40" height="6.65" fill="#c4d6f0"/><rect x="12.70" y="0.00" width="6.40" height="6.65" fill="#a8c2ea"/><rect x="19.05" y="0.00" width="6.40" height="6.65" fill="#d4e0f4"/><rect x="25.40" y="0.00" width="6.40" height="6.65" fill="#b4caec"/><rect x="31.75" y="0.00" width="6.40" height="6.65" fill="#98b6e4"/><rect x="38.10" y="0.00" width="6.40" height="6.65" fill="#c0d2ee"/><rect x="44.45" y="0.00" width="6.40" height="6.65" fill="#d4e0f4"/><rect x="50.80" y="0.00" width="6.40" height="6.65" fill="#c4d6f0"/><rect x="0.00" y="6.60" width="6.40" height="6.65" fill="#c4d6f0"/><rect x="6.35" y="6.60" width="6.40" height="6.65" fill="#8eb0e0"/><rect x="12.70" y="6.60" width="6.40" height="6.65" fill="#7aa2da"/><rect x="19.05" y="6.60" width="6.40" height="6.65" fill="#a8c2ea"/><rect x="25.40" y="6.60" width="6.40" height="6.65" fill="#6e9ad8"/><rect x="31.75" y="6.60" width="6.40" height="6.65" fill="#a8c2ea"/><rect x="38.10" y="6.60" width="6.40" height="6.65" fill="#8eb0e0"/><rect x="44.45" y="6.60" width="6.40" height="6.65" fill="#a0bce6"/><rect x="50.80" y="6.60" width="6.40" height="6.65" fill="#8eb0e0"/><rect x="-6.00" y="-12.80" width="63.50" height="6.80" fill="#f5f5f5"/><rect x="13.00" y="13.20" width="6.30" height="6.30" fill="#eef3fb"/></svg>
<svg class="abs" style="left:602px;top:536px" width="13" height="10" viewBox="0 0 13 10" fill="none" stroke="#444" stroke-width="1.2"><path d="M1 5.2l3.4 3.4L12 1"/></svg>
<div class="act" style="top:534px">活动</div>
<div class="lnk" style="left:874.5px;top:531px">启用</div>
<svg class="abs" style="left:1070px;top:519px" width="210" height="40" viewBox="0 0 210 40"><polygon points="10.8,32.3 10.8,29.4 17.2,25.4 23.7,30.2 30.9,23.3 37.3,22.3 43.8,23.3 50.3,22.3 56.7,30.2 63.2,30.4 69.6,32.0 76.1,30.4 82.6,24.4 89.0,27.0 95.5,28.7 102.7,28.3 109.1,11.5 115.6,22.3 122.1,28.4 128.5,26.3 135.0,30.2 141.4,29.9 148.6,22.3 155.1,26.3 161.5,24.4 168.0,30.2 174.5,30.9 180.9,29.4 187.4,30.4 193.9,27.7 201.0,25.1 201.0,32.3" fill="#e9f0fd"/><polyline points="10.8,29.4 17.2,25.4 23.7,30.2 30.9,23.3 37.3,22.3 43.8,23.3 50.3,22.3 56.7,30.2 63.2,30.4 69.6,32.0 76.1,30.4 82.6,24.4 89.0,27.0 95.5,28.7 102.7,28.3 109.1,11.5 115.6,22.3 122.1,28.4 128.5,26.3 135.0,30.2 141.4,29.9 148.6,22.3 155.1,26.3 161.5,24.4 168.0,30.2 174.5,30.9 180.9,29.4 187.4,30.4 193.9,27.7 201.0,25.1" fill="none" stroke="#4b92ee" stroke-width="1.3" stroke-linejoin="round"/></svg>
<div class="num" style="top:530.2px">483</div>
<div class="lnk free" style="left:1352px;top:530.2px">Free</div>
<div class="kebab" style="top:529.5px"><i></i><i></i><i></i></div>

<div class="abs" style="left:328px;top:577px;font-size:13px;line-height:16px;color:#333"><b style="color:#222">1</b><span style="margin-left:3px">项</span></div>
</div></body></html>
